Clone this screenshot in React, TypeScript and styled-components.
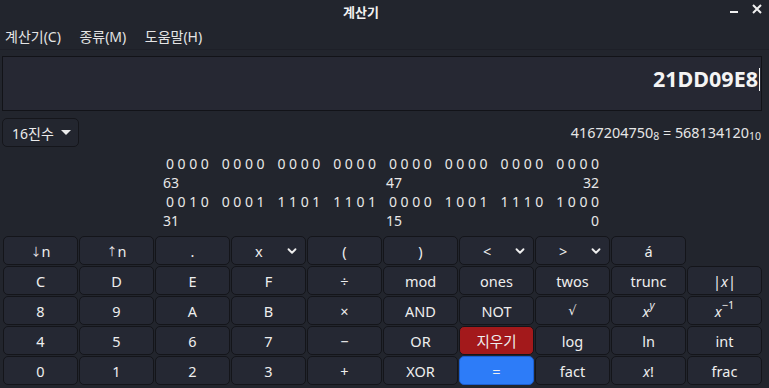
import React, { FC } from 'react';
import styled, { createGlobalStyle } from 'styled-components';
import { ChevronDown } from 'lucide-react';

const GlobalStyle = createGlobalStyle`
  html, body {
    margin: 0;
    padding: 0;
    background: #22252d;
  }
  body {
    font-family: "Noto Sans", "Noto Sans CJK KR", sans-serif;
    color: #e6e6e6;
  }
`;

const Window = styled.div`
  width: 769px;
  height: 388px;
  background: #22252d;
  overflow: hidden;
  display: flex;
  flex-direction: column;
`;

const TitleBar = styled.div`
  height: 22px;
  display: flex;
  align-items: center;
`;

const Title = styled.div`
  flex: 1;
  text-align: center;
  font-weight: bold;
  font-size: 13px;
  color: #f2f2f2;
`;

const Controls = styled.div`
  width: 47px;
  display: flex;
  align-items: center;
  justify-content: flex-end;
  gap: 13px;
  padding-right: 7px;
  box-sizing: border-box;
  svg {
    display: block;
  }
`;

const MenuBar = styled.div`
  height: 27px;
  display: flex;
  align-items: center;
  padding-left: 5px;
  gap: 18.5px;
  font-size: 14px;
  color: #e4e4e4;
  border-bottom: 1px solid #1e2028;
`;

const Display = styled.div`
  margin: 6px 7px 0 2px;
  border: 1px solid #121318;
  background: #262833;
  display: flex;
  justify-content: flex-end;
  align-items: flex-start;
  padding: 9px 1px 0 0;
  height: 44px;
`;

const Value = styled.span`
  font-size: 21.5px;
  font-weight: bold;
  color: #f4f4f4;
  line-height: 26px;
  display: flex;
  align-items: center;
`;

const Caret = styled.span`
  width: 1px;
  height: 23px;
  background: #f4f4f4;
  margin-left: 1px;
`;

const InfoRow = styled.div`
  margin: 7px 8px 0 2px;
  height: 29px;
  display: flex;
  align-items: center;
  justify-content: space-between;
`;

const BaseSelect = styled.div`
  height: 27px;
  width: 66px;
  border: 1px solid #15161b;
  border-radius: 5px;
  background: #23262f;
  display: flex;
  align-items: center;
  gap: 7px;
  padding-left: 9px;
  font-size: 14px;
  color: #ececec;
`;

const Triangle = styled.span`
  width: 0;
  height: 0;
  border-left: 5px solid transparent;
  border-right: 5px solid transparent;
  border-top: 5px solid #ececec;
`;

const Conversion = styled.div`
  font-size: 14.4px;
  color: #e6e6e6;
  sub {
    font-size: 10.5px;
    vertical-align: -2px;
  }
`;

const BitPanel = styled.div`
  margin: 7px 0 0 163px;
  width: 436px;
  display: grid;
  grid-template-columns: repeat(8, 1fr);
  column-gap: 10px;
  font-size: 14px;
  line-height: 19px;
  color: #e8e8e8;
`;

const BitGroup = styled.div`
  display: flex;
  justify-content: space-between;
  padding-left: 3px;
`;

const BitLabel = styled.div<{ $col: number; $right?: boolean }>`
  grid-column: ${(p) => p.$col};
  text-align: ${(p) => (p.$right ? 'right' : 'left')};
`;

const Keypad = styled.div`
  margin: 6px 0 0 3px;
  display: grid;
  grid-template-columns: repeat(10, 75px);
  grid-auto-rows: 29px;
  column-gap: 1px;
  row-gap: 1px;
`;

const Key = styled.button<{ $tone?: 'red' | 'blue' }>`
  margin: 0;
  padding: 0;
  border: 1px solid ${(p) => (p.$tone === 'blue' ? '#1b5fd1' : '#14151a')};
  border-radius: 5px;
  background: ${(p) => (p.$tone === 'red' ? '#a3191b' : p.$tone === 'blue' ? '#2d7cf8' : '#252833')};
  color: #eeeeee;
  font-family: "Noto Sans", "Noto Sans CJK KR", sans-serif;
  font-size: 14.5px;
  display: flex;
  align-items: center;
  justify-content: center;
  i {
    font-style: italic;
  }
  sup {
    font-size: 11px;
    line-height: 0;
    position: relative;
    top: -6px;
    vertical-align: baseline;
  }
`;

const Root = styled.span`
  font-family: "DejaVu Sans", sans-serif;
  font-size: 13px;
`;

const Empty = styled.div``;

const DropKey = styled(Key)`
  justify-content: flex-start;
  padding-left: 23px;
  gap: 22px;
  svg {
    margin-top: 1px;
  }
`;

const Arrow = styled.span`
  font-size: 11px;
`;

type KeyDef =
  | { kind: 'key'; label: React.ReactNode; tone?: 'red' | 'blue' }
  | { kind: 'drop'; label: string }
  | { kind: 'empty' };

const k = (label: React.ReactNode, tone?: 'red' | 'blue'): KeyDef => ({ kind: 'key', label, tone });
const d = (label: string): KeyDef => ({ kind: 'drop', label });

const keys: KeyDef[] = [
  k(<><Arrow>↓</Arrow>n</>), k(<><Arrow>↑</Arrow>n</>), k('.'), d('x'), k('('), k(')'), d('<'), d('>'), k('á'), { kind: 'empty' },
  k('C'), k('D'), k('E'), k('F'), k('÷'), k('mod'), k('ones'), k('twos'), k('trunc'), k(<>|<i>x</i>|</>),
  k('8'), k('9'), k('A'), k('B'), k('×'), k('AND'), k('NOT'), k(<Root>√</Root>), k(<><i>x</i><sup><i>y</i></sup></>), k(<><i>x</i><sup>−1</sup></>),
  k('4'), k('5'), k('6'), k('7'), k('−'), k('OR'), k('지우기', 'red'), k('log'), k('ln'), k('int'),
  k('0'), k('1'), k('2'), k('3'), k('+'), k('XOR'), k('=', 'blue'), k('fact'), k(<><i>x</i>!</>), k('frac'),
];

const high = ['0000', '0000', '0000', '0000', '0000', '0000', '0000', '0000'];
const low = ['0010', '0001', '1101', '1101', '0000', '1001', '1110', '1000'];

const BitRow: FC<{ groups: string[] }> = ({ groups }) => (
  <>
    {groups.map((g, i) => (
      <BitGroup key={i}>
        {g.split('').map((b, j) => (
          <span key={j}>{b}</span>
        ))}
      </BitGroup>
    ))}
  </>
);

export default function App() {
  return (
    <Window>
      <GlobalStyle />
      <TitleBar>
        <Title>계산기</Title>
        <Controls>
          <svg width="9" height="22" viewBox="0 0 9 22">
            <rect x="0" y="11" width="8" height="2" fill="#f0f0f0" />
          </svg>
          <svg width="10" height="22" viewBox="0 0 10 22">
            <path d="M1 5 L9 13 M9 5 L1 13" stroke="#f0f0f0" strokeWidth="2" />
          </svg>
        </Controls>
      </TitleBar>
      <MenuBar>
        <span>계산기(C)</span>
        <span>종류(M)</span>
        <span>도움말(H)</span>
      </MenuBar>
      <Display>
        <Value>
          21DD09E8
          <Caret />
        </Value>
      </Display>
      <InfoRow>
        <BaseSelect>
          16진수
          <Triangle />
        </BaseSelect>
        <Conversion>
          4167204750<sub>8</sub> = 568134120<sub>10</sub>
        </Conversion>
      </InfoRow>
      <BitPanel>
        <BitRow groups={high} />
        <BitLabel $col={1}>63</BitLabel>
        <BitLabel $col={5}>47</BitLabel>
        <BitLabel $col={8} $right>32</BitLabel>
        <BitRow groups={low} />
        <BitLabel $col={1}>31</BitLabel>
        <BitLabel $col={5}>15</BitLabel>
        <BitLabel $col={8} $right>0</BitLabel>
      </BitPanel>
      <Keypad>
        {keys.map((key, i) => {
          if (key.kind === 'empty') return <Empty key={i} />;
          if (key.kind === 'drop')
            return (
              <DropKey key={i}>
                <span>{key.label}</span>
                <ChevronDown size={14} strokeWidth={3.2} />
              </DropKey>
            );
          return (
            <Key key={i} $tone={key.tone}>
              {key.label}
            </Key>
          );
        })}
      </Keypad>
    </Window>
  );
}
